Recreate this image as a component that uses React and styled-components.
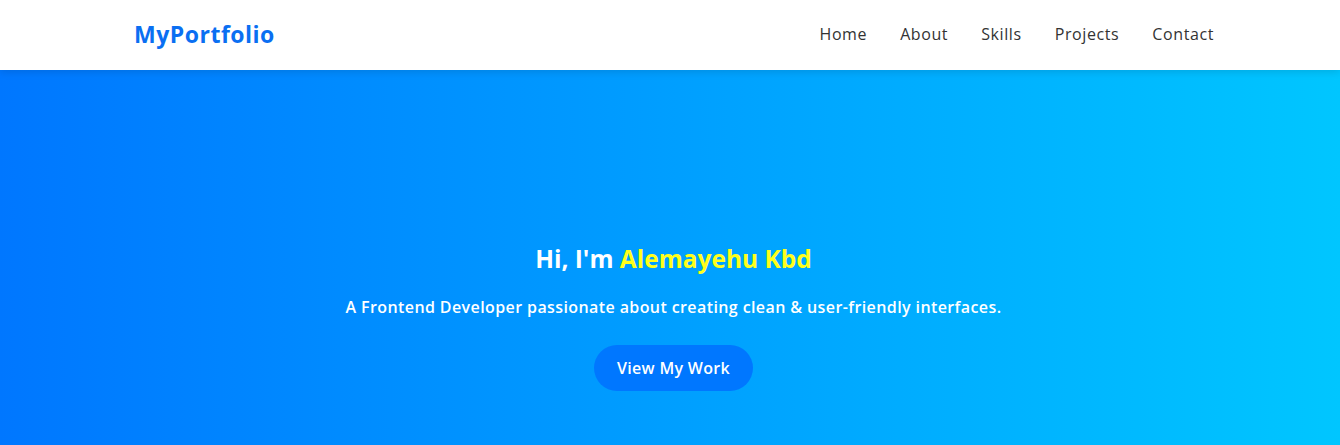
import React from "react";
import styled, { createGlobalStyle } from "styled-components";

const Global = createGlobalStyle`
  * { box-sizing: border-box; margin: 0; padding: 0; }
  body { font-family: "Open Sans", "Liberation Sans", sans-serif; background: #fff; }
`;

const Header = styled.header`
  height: 70px;
  background: #fff;
  box-shadow: 0 2px 8px rgba(0, 0, 0, 0.12);
  position: relative;
  z-index: 2;
`;

const HeaderInner = styled.div`
  height: 100%;
  padding: 0 126px 2px 134px;
  display: flex;
  align-items: center;
  justify-content: space-between;
`;

const Logo = styled.div`
  color: #0a6ff2;
  font-size: 23px;
  font-weight: 700;
  letter-spacing: 0.5px;
`;

const Nav = styled.nav`
  display: flex;
  gap: 33px;
`;

const NavLink = styled.a`
  color: #333;
  font-size: 16px;
  font-weight: 500;
  text-decoration: none;
  letter-spacing: 0.6px;
`;

const Hero = styled.section`
  height: 375px;
  background: linear-gradient(to right, #0077ff, #00c6ff);
  display: flex;
  flex-direction: column;
  align-items: center;
  padding: 174px 0 0 7px;
  color: #fff;
  text-align: center;
`;

const Title = styled.h1`
  font-size: 24.5px;
  font-weight: 700;
  line-height: 30px;
`;

const Highlight = styled.span`
  color: #ffff1a;
`;

const Lead = styled.p`
  margin-top: 21px;
  font-size: 16px;
  font-weight: 600;
  line-height: 24px;
  letter-spacing: 0.4px;
`;

const Button = styled.a`
  margin-top: 26px;
  width: 159px;
  height: 46px;
  border-radius: 23px;
  background: #0077ff;
  color: #fff;
  font-size: 16px;
  font-weight: 600;
  letter-spacing: 0.3px;
  display: flex;
  align-items: center;
  justify-content: center;
  text-decoration: none;
`;

export default function App() {
  return (
    <>
      <Global />
      <Header>
        <HeaderInner>
          <Logo>MyPortfolio</Logo>
          <Nav>
            {["Home", "About", "Skills", "Projects", "Contact"].map((l) => (
              <NavLink key={l} href="#">{l}</NavLink>
            ))}
          </Nav>
        </HeaderInner>
      </Header>
      <Hero>
        <Title>
          Hi, I'm <Highlight>Alemayehu Kbd</Highlight>
        </Title>
        <Lead>A Frontend Developer passionate about creating clean &amp; user-friendly interfaces.</Lead>
        <Button href="#">View My Work</Button>
      </Hero>
    </>
  );
}
